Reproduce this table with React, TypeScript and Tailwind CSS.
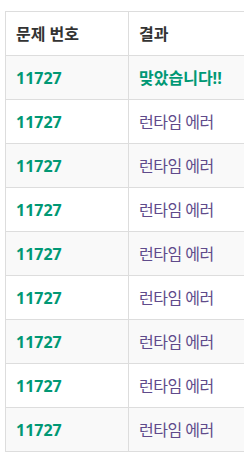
import React from "react";

const rows = Array.from({ length: 9 }, (_, i) => ({
  id: "11727",
  ok: i === 0,
}));

export default function App() {
  return (
    <div
      className="w-[244px] h-[454px] overflow-hidden bg-white pt-[11px] pl-[5px]"
      style={{ fontFamily: '"Open Sans", "Noto Sans CJK KR", sans-serif' }}
    >
      <table className="border-collapse w-[400px] text-[16px] text-[#333]">
        <thead>
          <tr className="h-[44px] bg-white">
            <th className="border border-[#ddd] w-[123px] pl-[10px] text-left font-bold">문제 번호</th>
            <th className="border border-[#ddd] pl-[10px] text-left font-bold">결과</th>
          </tr>
        </thead>
        <tbody>
          {rows.map((r, i) => (
            <tr key={i} className={i % 2 === 0 ? "h-[44px] bg-[#f9f9f9]" : "h-[44px] bg-white"}>
              <td className="border border-[#ddd] pl-[10px] font-bold text-[#009874]">{r.id}</td>
              <td
                className={
                  r.ok
                    ? "border border-[#ddd] pl-[10px] font-bold text-[#009874]"
                    : "border border-[#ddd] pl-[10px] text-[#5f4b8b] tracking-[-0.5px]"
                }
              >
                {r.ok ? "맞았습니다!!" : "런타임 에러"}
              </td>
            </tr>
          ))}
        </tbody>
      </table>
    </div>
  );
}
